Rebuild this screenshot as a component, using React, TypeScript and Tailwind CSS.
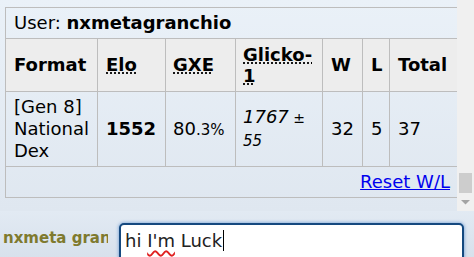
import React from "react";

export default function App() {
  const font = { fontFamily: '"DejaVu Sans", Verdana, sans-serif' };
  return (
    <div className="w-[474px] h-[257px] overflow-hidden flex flex-col" style={font}>
      {/* scroll panel */}
      <div className="flex h-[211px]">
        <div className="w-[457px] h-[211px] overflow-hidden bg-gradient-to-b from-[#eaf1f8] to-[#dfe7f0] pt-[7px] pl-[5px]">
          <table className="table-fixed border-collapse w-[453px] text-[18px] leading-[22px] text-black">
            <colgroup>
              <col className="w-[92px]" />
              <col className="w-[68px]" />
              <col className="w-[70px]" />
              <col className="w-[87px]" />
              <col className="w-[40px]" />
              <col className="w-[27px]" />
              <col className="w-[69px]" />
            </colgroup>
            <tbody>
              <tr>
                <td colSpan={7} className="border border-[#bdbdbd] h-[31px] px-[8px] py-0 align-middle whitespace-nowrap">
                  User: <strong className="font-bold">nxmetagranchio</strong>
                </td>
              </tr>
              <tr className="bg-[#ededed]">
                <th className="border border-[#bdbdbd] h-[53px] px-[8px] text-left font-bold align-middle">Format</th>
                <th className="border border-[#bdbdbd] px-[8px] text-left font-bold align-middle">
                  <span className="underline decoration-dotted underline-offset-2">Elo</span>
                </th>
                <th className="border border-[#bdbdbd] px-[7px] text-left font-bold align-middle">
                  <span className="underline decoration-dotted underline-offset-2">GXE</span>
                </th>
                <th className="border border-[#bdbdbd] px-[7px] text-left font-bold align-middle leading-[21px]">
                  <span className="underline decoration-dotted underline-offset-2">Glicko-1</span>
                </th>
                <th className="border border-[#bdbdbd] px-[8px] text-left font-bold align-middle">W</th>
                <th className="border border-[#bdbdbd] px-[8px] text-left font-bold align-middle">L</th>
                <th className="border border-[#bdbdbd] px-[8px] text-left font-bold align-middle">Total</th>
              </tr>
              <tr>
                <td className="border border-[#bdbdbd] h-[75px] px-[8px] align-middle">[Gen 8] National Dex</td>
                <td className="border border-[#bdbdbd] px-[8px] align-middle font-bold">1552</td>
                <td className="border border-[#bdbdbd] px-[7px] align-middle whitespace-nowrap">
                  80<span className="text-[15px]">.3%</span>
                </td>
                <td className="border border-[#bdbdbd] px-[7px] align-middle">
                  <em className="italic">1767</em>
                  <span className="text-[14px]"> ± </span>
                  <br />
                  <em className="italic text-[15px]">55</em>
                </td>
                <td className="border border-[#bdbdbd] px-[8px] align-middle">32</td>
                <td className="border border-[#bdbdbd] px-[8px] align-middle">5</td>
                <td className="border border-[#bdbdbd] px-[8px] align-middle">37</td>
              </tr>
              <tr>
                <td colSpan={7} className="border border-[#bdbdbd] h-[31px] px-[8px] text-right align-middle">
                  <a href="#" className="text-[#0000ee] underline">Reset W/L</a>
                </td>
              </tr>
            </tbody>
          </table>
        </div>
        {/* scrollbar */}
        <div className="w-[17px] h-[211px] bg-[#f0f0f0] flex flex-col items-center">
          <div className="flex-1" />
          <div className="w-[13px] h-[20px] bg-[#cdcdcd]" />
          <div className="h-[18px] flex items-center justify-center">
            <svg width="9" height="5" viewBox="0 0 9 5">
              <polygon points="0,0 9,0 4.5,4.5" fill="#a3a3a3" />
            </svg>
          </div>
        </div>
      </div>
      <div className="h-[2px] bg-[#a9a9a9]" />
      {/* chat bar */}
      <div className="flex-1 bg-gradient-to-b from-[#e2eaf3] to-[#d6e0eb] flex items-start">
        <div className="w-[108px] pl-[3px] pt-[18px] overflow-hidden whitespace-nowrap text-[15px] font-bold text-[#7f7a2e] leading-[18px]">
          nxmeta granchio
        </div>
        <div className="ml-[11px] mt-[12px] w-[345px] h-[40px] rounded-[5px] border-2 border-[#15497f] bg-white shadow-[0_0_3px_1px_rgba(100,150,210,0.6)] pl-[4px] pt-[5px] text-[18px] leading-[22px] text-[#222] whitespace-nowrap">
          hi{" "}
          <span className="underline decoration-wavy decoration-[#e02020] decoration-[1.5px] underline-offset-[3px]">I'm</span>{" "}
          Luck<span className="inline-block align-top w-[1px] h-[21px] bg-black ml-[1px]" />
        </div>
      </div>
    </div>
  );
}
